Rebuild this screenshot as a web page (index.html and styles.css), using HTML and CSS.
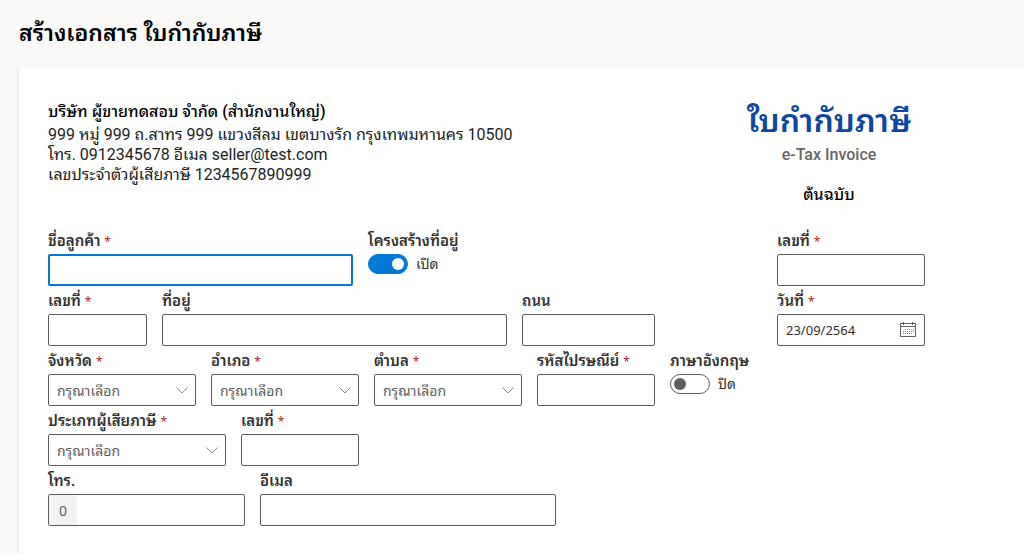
FILE: index.html
```html
<!DOCTYPE html>
<html lang="th">
<head>
    <meta charset="UTF-8">
    <meta name="viewport" content="width=device-width, initial-scale=1.0">
    <title>สร้างเอกสาร ใบกำกับภาษี</title>
    <link rel="stylesheet" href="styles.css">
</head>
<body>
    <h1 class="page-title">สร้างเอกสาร ใบกำกับภาษี</h1>

    <main class="card">
        <header class="doc-header">
            <div class="company">
                <h2>บริษัท ผู้ขายทดสอบ จำกัด (สำนักงานใหญ่)</h2>
                <p>999 หมู่ 999 ถ.สาทร 999 แขวงสีลม เขตบางรัก กรุงเทพมหานคร 10500</p>
                <p>โทร. 0912345678 อีเมล seller@test.com</p>
                <p>เลขประจำตัวผู้เสียภาษี 1234567890999</p>
            </div>
            <div class="doc-type">
                <h2>ใบกำกับภาษี</h2>
                <p class="doc-sub">e-Tax Invoice</p>
                <p class="doc-copy">ต้นฉบับ</p>
            </div>
        </header>

        <form class="doc-form">
            <div class="customer">
                <div class="row row-name">
                    <div class="field">
                        <label for="name">ชื่อลูกค้า <span class="req">*</span></label>
                        <input class="box active" type="text" id="name">
                    </div>
                    <div class="field">
                        <label for="structured">โครงสร้างที่อยู่</label>
                        <div class="switch">
                            <input type="checkbox" id="structured" checked>
                            <span>เปิด</span>
                        </div>
                    </div>
                </div>

                <div class="row row-address">
                    <div class="field">
                        <label for="house">เลขที่ <span class="req">*</span></label>
                        <input class="box" type="text" id="house">
                    </div>
                    <div class="field">
                        <label for="address">ที่อยู่</label>
                        <input class="box" type="text" id="address">
                    </div>
                    <div class="field">
                        <label for="road">ถนน</label>
                        <input class="box" type="text" id="road">
                    </div>
                </div>

                <div class="row row-area">
                    <div class="field">
                        <label for="province">จังหวัด <span class="req">*</span></label>
                        <div class="box combo">
                            <select id="province"><option>กรุณาเลือก</option></select>
                            <svg class="chevron" viewBox="0 0 12 12"><path d="M0.5 3.500 6 9l5.500-5.500"/></svg>
                        </div>
                    </div>
                    <div class="field">
                        <label for="district">อำเภอ <span class="req">*</span></label>
                        <div class="box combo">
                            <select id="district"><option>กรุณาเลือก</option></select>
                            <svg class="chevron" viewBox="0 0 12 12"><path d="M0.5 3.500 6 9l5.500-5.500"/></svg>
                        </div>
                    </div>
                    <div class="field">
                        <label for="subdistrict">ตำบล <span class="req">*</span></label>
                        <div class="box combo">
                            <select id="subdistrict"><option>กรุณาเลือก</option></select>
                            <svg class="chevron" viewBox="0 0 12 12"><path d="M0.5 3.500 6 9l5.500-5.500"/></svg>
                        </div>
                    </div>
                    <div class="field">
                        <label for="postcode">รหัสไปรษณีย์ <span class="req">*</span></label>
                        <input class="box" type="text" id="postcode">
                    </div>
                    <div class="field">
                        <label for="english">ภาษาอังกฤษ</label>
                        <div class="switch">
                            <input type="checkbox" id="english">
                            <span>ปิด</span>
                        </div>
                    </div>
                </div>

                <div class="row row-tax">
                    <div class="field">
                        <label for="taxtype">ประเภทผู้เสียภาษี <span class="req">*</span></label>
                        <div class="box combo">
                            <select id="taxtype"><option>กรุณาเลือก</option></select>
                            <svg class="chevron" viewBox="0 0 12 12"><path d="M0.5 3.500 6 9l5.500-5.500"/></svg>
                        </div>
                    </div>
                    <div class="field">
                        <label for="taxid">เลขที่ <span class="req">*</span></label>
                        <input class="box" type="text" id="taxid">
                    </div>
                </div>

                <div class="row row-contact">
                    <div class="field">
                        <label for="phone">โทร.</label>
                        <div class="box phone">
                            <span class="prefix">0</span>
                            <input type="tel" id="phone">
                        </div>
                    </div>
                    <div class="field">
                        <label for="email">อีเมล</label>
                        <input class="box" type="email" id="email">
                    </div>
                </div>
            </div>

            <div class="document">
                <div class="field">
                    <label for="docno">เลขที่ <span class="req">*</span></label>
                    <input class="box" type="text" id="docno">
                </div>
                <div class="field">
                    <label for="docdate">วันที่ <span class="req">*</span></label>
                    <div class="box date">
                        <input type="text" id="docdate" value="23/09/2564">
                        <svg class="calendar" viewBox="0 0 16 16">
                            <path d="M0.500 1.500h15v13h-15zM0.500 4.500h15M3.500 0v3M12.500 0v3"/>
                            <path class="days" d="M5 7.500h9M3 9.500h11M3 11.500h9"/>
                        </svg>
                    </div>
                </div>
            </div>
        </form>
    </main>
</body>
</html>
```

FILE: styles.css
```css
* {
    box-sizing: border-box;
}

body {
    margin: 0;
    min-height: 100vh;
    display: flex;
    flex-direction: column;
    background: #faf9f8;
    color: #000;
    font-family: "Noto Sans", "Noto Sans Thai Looped", "Noto Sans Thai", sans-serif;
    font-size: 14px;
}

h1,
h2,
p {
    margin: 0;
}

input,
select {
    font: inherit;
    color: inherit;
}

.page-title {
    padding: 16px 19px 18px;
    font-size: 23px;
    line-height: 33px;
    font-weight: 600;
}

.card {
    flex: 1;
    margin-left: 19px;
    padding: 32px 20px 26px 29px;
    background: #fff;
    box-shadow: 0 2px 4px rgba(0, 0, 0, 0.12);
}

/* seller and document heading */
.doc-header {
    display: grid;
    grid-template-columns: 606fr 350fr;
    height: 127px;
    font-family: Roboto, "Noto Sans Thai Looped", "Noto Sans Thai", sans-serif;
    font-size: 16px;
}

.company h2 {
    font-size: 16px;
    line-height: 26px;
    font-weight: 500;
}

.company p {
    line-height: 20px;
    color: #201f1e;
}

.doc-type {
    text-align: center;
}

.doc-type h2 {
    font-size: 32px;
    line-height: 44px;
    font-weight: 600;
    color: #0d47a1;
}

.doc-sub {
    line-height: 24px;
    font-weight: 500;
    color: #666;
}

.doc-copy {
    margin-top: 16px;
    line-height: 24px;
    font-weight: 500;
}

/* form */
.doc-form {
    display: grid;
    grid-template-columns: 714fr 227fr;
    gap: 15px;
}

.row {
    display: grid;
    gap: 15px;
}

.row-name {
    grid-template-columns: 305fr 394fr;
}

.row-address {
    grid-template-columns: 99fr 345fr 133fr 92fr;
}

.row-area {
    grid-template-columns: 148fr 148fr 148fr 118fr 92fr;
}

.row-tax {
    grid-template-columns: 178fr 118fr 388fr;
}

.row-contact {
    grid-template-columns: 197fr 296fr 191fr;
}

.document .field {
    max-width: 148px;
}

.field {
    min-width: 0;
}

.field label {
    display: block;
    height: 28px;
    line-height: 28px;
    font-size: 15px;
    font-weight: 600;
    color: #323130;
    white-space: nowrap;
}

.req {
    color: #a4262c;
    font-size: 12px;
    font-weight: 400;
}

.box {
    display: flex;
    align-items: center;
    width: 100%;
    height: 32px;
    border: 1px solid #605e5c;
    border-radius: 2px;
    background: #fff;
    padding: 0 8px;
    outline: 0;
}

.box.active {
    border: 2px solid #0078d4;
}

.box select,
.box input {
    flex: 1;
    min-width: 0;
    height: 100%;
    padding: 0;
    border: 0;
    outline: 0;
    background: transparent;
    color: #605e5c;
    appearance: none;
}

.box.date input {
    font-size: 13px;
    color: #323130;
}

.chevron {
    width: 12px;
    height: 12px;
    margin-right: -1px;
    fill: none;
    stroke: #8a8886;
}

.calendar {
    width: 16px;
    height: 16px;
    fill: none;
    stroke: #605e5c;
}

.calendar .days {
    stroke: #8a8886;
    stroke-dasharray: 1 1;
}

.box.phone {
    padding: 0;
}

.prefix {
    display: flex;
    align-items: center;
    height: 100%;
    padding: 0 10px;
    background: #f3f2f1;
    color: #605e5c;
}

.switch {
    display: flex;
    align-items: center;
    gap: 8px;
    height: 20px;
    line-height: 20px;
    color: #323130;
}

.switch input {
    display: flex;
    align-items: center;
    width: 40px;
    height: 20px;
    margin: 0;
    padding: 0 3px;
    border: 1px solid #605e5c;
    border-radius: 10px;
    background: #fff;
    appearance: none;
}

.switch input::before {
    content: "";
    width: 12px;
    height: 12px;
    border-radius: 50%;
    background: #605e5c;
}

.switch input:checked {
    justify-content: flex-end;
    border-color: #0078d4;
    background: #0078d4;
}

.switch input:checked::before {
    background: #fff;
}
```
